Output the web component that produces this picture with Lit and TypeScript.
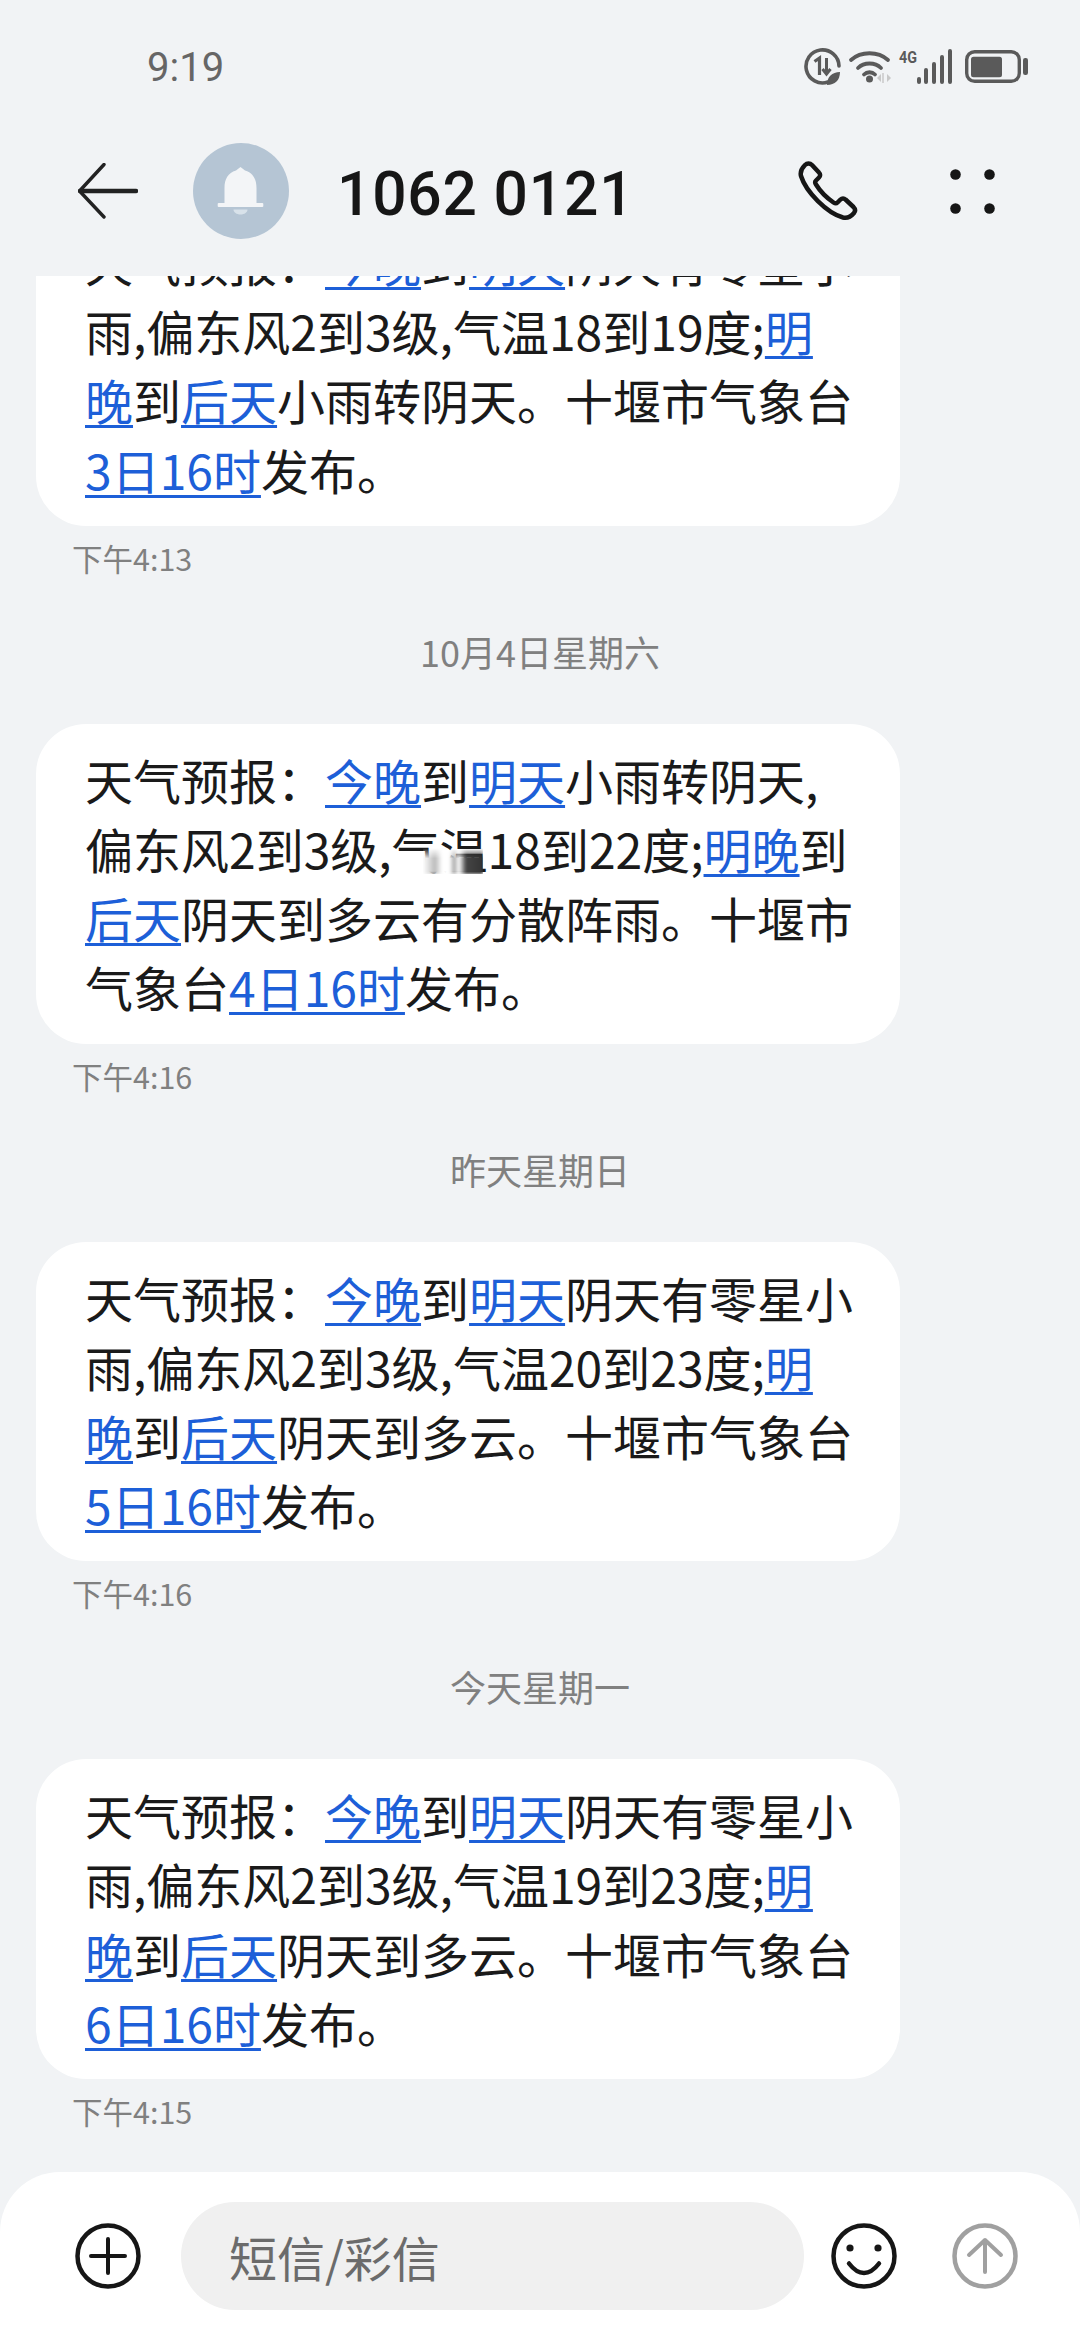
import { LitElement, html, css, svg } from 'lit';
import { customElement } from 'lit/decorators.js';

type Line = string;

// [[...]] marks a detected link inside a line
const LONG_A = (temp: string, tail: string, day: string): Line[] => [
  '天气预报：[[今晚]]到[[明天]]阴天有零星小',
  `雨,偏东风2到3级,气温${temp}度;[[明]]`,
  `[[晚]]到[[后天]]${tail}。十堰市气象台`,
  `[[${day}日16时]]发布。`,
];

const THREADS: { lines: Line[]; time: string; date?: string }[] = [
  { lines: LONG_A('18到19', '小雨转阴天', '3'), time: '下午4:13', date: '10月4日星期六' },
  {
    lines: [
      '天气预报：[[今晚]]到[[明天]]小雨转阴天,',
      '偏东风2到3级,气温18到22度;[[明晚]]到',
      '[[后天]]阴天到多云有分散阵雨。十堰市',
      '气象台[[4日16时]]发布。',
    ],
    time: '下午4:16',
    date: '昨天星期日',
  },
  { lines: LONG_A('20到23', '阴天到多云', '5'), time: '下午4:16', date: '今天星期一' },
  { lines: LONG_A('19到23', '阴天到多云', '6'), time: '下午4:15' },
];

@customElement('app-root')
export class AppRoot extends LitElement {
  static styles = css`
    :host {
      display: flex;
      flex-direction: column;
      width: 1080px;
      height: 2340px;
      overflow: hidden;
      background: #f1f3f5;
      font-family: 'Noto Sans CJK SC', 'Noto Sans', sans-serif;
      color: #1a1a1a;
    }
    .status {
      flex: none;
      height: 100px;
      padding: 0 52px 0 147px;
      display: flex;
      align-items: flex-start;
      justify-content: space-between;
    }
    .clock {
      margin-top: 43px;
      font: 400 40px/50px 'Roboto', sans-serif;
      color: #666;
    }
    .status-icons {
      margin-top: 47px;
      display: block;
    }
    .header {
      flex: none;
      height: 176px;
      display: flex;
      align-items: center;
      padding: 6px 0 0 78px;
      box-sizing: border-box;
    }
    .avatar {
      margin-left: 55px;
      width: 96px;
      height: 96px;
      flex: none;
      display: block;
    }
    .title {
      margin: 7px 0 0 48px;
      font: 500 60.5px/80px 'Roboto', sans-serif;
      letter-spacing: 0.8px;
      color: #161616;
      white-space: nowrap;
    }
    .header-actions {
      margin-left: auto;
      padding-right: 85px;
      display: flex;
      align-items: center;
      gap: 92px;
    }
    .header svg {
      display: block;
    }
    .messages {
      flex: 1;
      min-height: 0;
      overflow: hidden;
      display: flex;
      flex-direction: column;
      justify-content: flex-end;
      padding-bottom: 25px;
    }
    .bubble {
      flex: none;
      position: relative;
      width: 864px;
      box-sizing: border-box;
      margin-left: 36px;
      padding: 21px 0 22px 49px;
      background: #fff;
      border-radius: 50px;
      font-size: 48px;
      line-height: 69.2px;
      white-space: nowrap;
    }
    .bubble a {
      color: #1d5fd8;
      text-decoration: underline;
      text-decoration-thickness: 3px;
      text-underline-offset: 5px;
    }
    .line {
      display: block;
      height: 69.2px;
    }
    .time {
      flex: none;
      height: 68px;
      padding-left: 72px;
      font-size: 30.5px;
      line-height: 65px;
      color: #808080;
    }
    .date {
      flex: none;
      height: 60px;
      margin: 27px 0 43px;
      text-align: center;
      font-size: 36px;
      line-height: 60px;
      color: #808080;
    }
    .smudge {
      position: absolute;
      left: 387px;
      top: 124px;
      width: 60px;
      height: 26px;
      background: linear-gradient(90deg, #fff 0%, #bbb 20%, #fff 32%, #fff 44%, #aaa 52%, #fff 60%, #444 72%, #333 100%);
      -webkit-mask-image: linear-gradient(180deg, transparent 0%, #000 40%);
      mask-image: linear-gradient(180deg, transparent 0%, #000 40%);
      filter: blur(1.5px);
    }
    .composer {
      flex: none;
      height: 168px;
      background: #fff;
      border-radius: 60px 60px 0 0;
      display: flex;
      align-items: flex-start;
      box-sizing: border-box;
      padding: 30px 0 0 75px;
    }
    .composer svg {
      flex: none;
      display: block;
      margin-top: 21px;
    }
    .field {
      flex: none;
      width: 623px;
      height: 108px;
      margin: 0 27px 0 40px;
      padding-left: 48px;
      box-sizing: border-box;
      border-radius: 54px;
      background: #f0f0f0;
      font-size: 48px;
      line-height: 108px;
      color: #6b6b6b;
    }
    .send {
      margin-left: 55px;
    }
  `;

  private renderLine(line: Line) {
    const parts = line.split(/(\[\[.*?\]\])/).filter(Boolean);
    return html`<span class="line">${parts.map((p) =>
      p.startsWith('[[') ? html`<a>${p.slice(2, -2)}</a>` : p
    )}</span>`;
  }

  private statusIcons() {
    return html`<svg class="status-icons" width="224" height="40" viewBox="0 0 224 40" fill="none">
      <path d="M24 35A16.5 16.5 0 1 1 35 19" stroke="#5a5a5a" stroke-width="3.6" stroke-linecap="round" />
      <path d="M10.5 14.5l5-3.5v17" stroke="#5a5a5a" stroke-width="3.2" />
      <path d="M22.5 11v15m-4-4l4 5 4-5" stroke="#5a5a5a" stroke-width="3" />
      <path d="M23 38c0-8 5-13 13-13 0 8-5 13-13 13z" fill="#5a5a5a" />
      <g stroke="#5a5a5a" stroke-width="3.8" stroke-linecap="round">
        <path d="M47 13c10-9 27-9 37 0" />
        <path d="M54 21c6-6 17-6 23 0" />
        <path d="M60 27.5c3-3 8-3 11 0" />
      </g>
      <circle cx="65.5" cy="32" r="3.5" fill="#5a5a5a" />
      <path d="M77 27l-4 4 4 4zM83 27l4 4-4 4z" fill="#c8c8c8" />
      <path d="M79 26v10" stroke="#c8c8c8" stroke-width="1.5" />
      <text x="95" y="16" font-family="'Roboto', sans-serif" font-weight="700" font-size="17" fill="#5a5a5a" textLength="18" lengthAdjust="spacingAndGlyphs">4G</text>
      <g stroke="#5a5a5a" stroke-width="4" stroke-linecap="round">
        <path d="M115 32v3M122 23v12M130 17v18M138 10v25M146 4v31" />
      </g>
      <rect x="162.7" y="4.7" width="52.6" height="29.6" rx="8" stroke="#5a5a5a" stroke-width="3.4" />
      <rect x="167" y="9.7" width="31" height="20.6" rx="2.5" fill="#5a5a5a" />
      <rect x="219" y="11" width="5" height="17" rx="2.2" fill="#5a5a5a" />
    </svg>`;
  }

  private bell() {
    return svg`<circle cx="48" cy="48" r="48" fill="#b5c5d4" />
      <path d="M47.5 24L52 27.5C60 30 63.5 36 63.5 45V61H31.5V45C31.5 36 35 30 43 27.5Z" fill="#f3f5f7" />
      <rect x="24.7" y="60" width="45.6" height="4" rx="1" fill="#f3f5f7" />
      <path d="M40.5 66.5h14c0 2.800-3 5-7 5s-7-2.200-7-5z" fill="#d8e2ea" />`;
  }

  render() {
    return html`
      <div class="status">
        <span class="clock">9:19</span>
        ${this.statusIcons()}
      </div>
      <div class="header">
        <svg width="60" height="56" viewBox="0 0 60 56" fill="none" stroke="#222" stroke-linecap="round">
          <path d="M2 28h56" stroke-width="4.6" />
          <path d="M26 1.5L2.5 27M2.5 29L26 54" stroke-width="3.4" />
        </svg>
        <svg class="avatar" viewBox="0 0 96 96">${this.bell()}</svg>
        <span class="title">1062 0121</span>
        <div class="header-actions">
          <svg width="60" height="60" viewBox="0 0 60 60" fill="none" stroke="#161616" stroke-width="4.5" stroke-linejoin="round">
            <path d="M7 4C9 2 12 2 14 4L21 11.5C22.5 13 22.5 15 21 16.5L18 19.5C17 20.5 17 22 18 23.5C22 30 29 37 35.5 41.5C37 42.5 38.5 42.5 39.5 41.5L42.5 38.5C44 37 46 37 47.5 38.5L55.5 46C57.5 48 57.5 50 56 52C53 55.5 49 57.5 45 56.5C29 52 8 31 3 15C2 11 4 7 7 4Z" />
          </svg>
          <svg width="45" height="45" viewBox="0 0 45 45" fill="#161616">
            <circle cx="5.5" cy="5.5" r="5.3" /><circle cx="39.5" cy="5.5" r="5.3" />
            <circle cx="5.5" cy="39.5" r="5.3" /><circle cx="39.5" cy="39.5" r="5.3" />
          </svg>
        </div>
      </div>
      <div class="messages">
        ${THREADS.map((t, i) => html`
          <div class="bubble">
            ${t.lines.map((l) => this.renderLine(l))}
            ${i === 1 ? html`<div class="smudge"></div>` : ''}
          </div>
          <div class="time">${t.time}</div>
          ${t.date ? html`<div class="date">${t.date}</div>` : ''}
        `)}
      </div>
      <div class="composer">
        <svg width="66" height="66" viewBox="0 0 66 66" fill="none" stroke="#161616" stroke-linecap="round">
          <circle cx="33" cy="33" r="30.5" stroke-width="4.5" />
          <path d="M33 16v34M16 33h34" stroke-width="4" />
        </svg>
        <div class="field">短信/彩信</div>
        <svg width="66" height="66" viewBox="0 0 66 66" fill="none" stroke="#161616" stroke-linecap="round">
          <circle cx="33" cy="33" r="30.5" stroke-width="4.5" />
          <circle cx="19" cy="25" r="3.6" fill="#161616" stroke="none" />
          <circle cx="47" cy="25" r="3.6" fill="#161616" stroke="none" />
          <path d="M18 40.5C23 47 28 50 33 50S43 47 48 40.5" stroke-width="4.5" />
        </svg>
        <svg class="send" width="66" height="66" viewBox="0 0 66 66" fill="none" stroke="#a0a0a0" stroke-linecap="round" stroke-linejoin="round">
          <circle cx="33" cy="33" r="30.5" stroke-width="4.5" />
          <path d="M33 49V17M17 32L33 17l16 15" stroke-width="4" />
        </svg>
      </div>
    `;
  }
}

declare global {
  interface HTMLElementTagNameMap {
    'app-root': AppRoot;
  }
}
